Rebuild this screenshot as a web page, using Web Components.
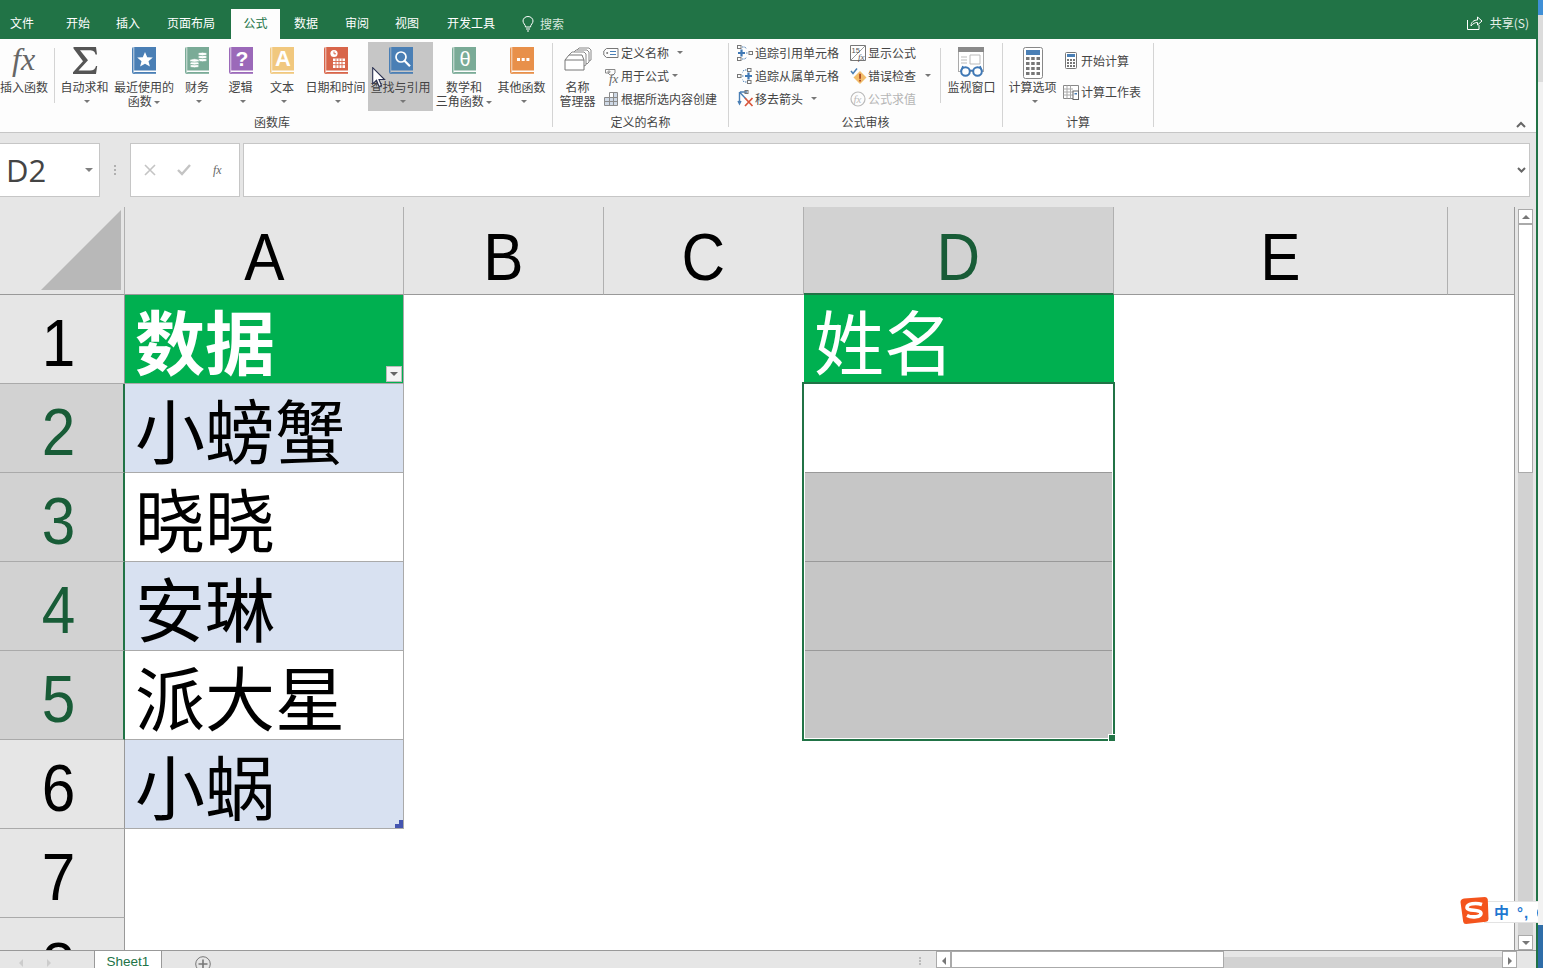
<!DOCTYPE html>
<html lang="zh">
<head>
<meta charset="utf-8">
<title>Excel</title>
<style>
  html, body { margin: 0; padding: 0; height: 100%; overflow: hidden; background: #e6e6e6; }
  body { font-family: "Noto Sans CJK SC", "Liberation Sans", sans-serif; font-size: 12px; color: #444; }
</style>
</head>
<body>
<xl-app>
  <xl-tabs></xl-tabs>
  <xl-ribbon>
    <xl-group label="函数库" style="width:552px" shift="8">
      <xl-big style="width:48px;margin-right:6px"><xl-icon name="fx"></xl-icon>插入函数</xl-big>
      <xl-sep short></xl-sep>
      <xl-big style="width:59px"><xl-icon name="sigma"></xl-icon>自动求和<br><xl-caret nudge></xl-caret></xl-big>
      <xl-big style="width:60px"><xl-icon name="recent"></xl-icon>最近使用的<br>函数 <xl-caret></xl-caret></xl-big>
      <xl-big style="width:46px"><xl-icon name="finance"></xl-icon>财务<br><xl-caret nudge></xl-caret></xl-big>
      <xl-big style="width:41px"><xl-icon name="logic"></xl-icon>逻辑<br><xl-caret nudge></xl-caret></xl-big>
      <xl-big style="width:42px"><xl-icon name="text"></xl-icon>文本<br><xl-caret nudge></xl-caret></xl-big>
      <xl-big style="width:65px"><xl-icon name="date"></xl-icon>日期和时间<br><xl-caret nudge></xl-caret></xl-big>
      <xl-big style="width:65px" hot><xl-icon name="lookup"></xl-icon>查找与引用<br><xl-caret nudge></xl-caret></xl-big>
      <xl-big style="width:62px"><xl-icon name="math"></xl-icon>数学和<br>三角函数 <xl-caret></xl-caret></xl-big>
      <xl-big style="width:53px"><xl-icon name="more"></xl-icon>其他函数<br><xl-caret nudge></xl-caret></xl-big>
    </xl-group>
    <xl-sep></xl-sep>
    <xl-group label="定义的名称" style="width:175px">
      <xl-big style="width:49px"><xl-icon name="names"></xl-icon>名称<br>管理器</xl-big>
      <xl-col>
        <xl-small><xl-icon name="define"></xl-icon>定义名称<xl-caret style="margin-left:8px"></xl-caret></xl-small>
        <xl-small><xl-icon name="useformula"></xl-icon>用于公式<xl-caret style="margin-left:3px"></xl-caret></xl-small>
        <xl-small><xl-icon name="fromsel"></xl-icon>根据所选内容创建</xl-small>
      </xl-col>
    </xl-group>
    <xl-sep></xl-sep>
    <xl-group label="公式审核" style="width:273px">
      <xl-col style="width:113px;margin-left:7px">
        <xl-small><xl-icon name="prec"></xl-icon>追踪引用单元格</xl-small>
        <xl-small><xl-icon name="dep"></xl-icon>追踪从属单元格</xl-small>
        <xl-small><xl-icon name="rmarrow"></xl-icon>移去箭头<xl-caret style="margin-left:8px"></xl-caret></xl-small>
      </xl-col>
      <xl-col style="width:91px">
        <xl-small><xl-icon name="show"></xl-icon>显示公式</xl-small>
        <xl-small><xl-icon name="check"></xl-icon>错误检查<xl-caret style="margin-left:9px"></xl-caret></xl-small>
        <xl-small off><xl-icon name="evalf"></xl-icon>公式求值</xl-small>
      </xl-col>
      <xl-sep short></xl-sep>
      <xl-big style="width:61px"><xl-icon name="watch"></xl-icon>监视窗口</xl-big>
    </xl-group>
    <xl-sep></xl-sep>
    <xl-group label="计算" style="width:150px">
      <xl-big style="width:59px"><xl-icon name="calcopt"></xl-icon>计算选项<br><xl-caret nudge></xl-caret></xl-big>
      <xl-col tall>
        <xl-small tall><xl-icon name="calcnow"></xl-icon>开始计算</xl-small>
        <xl-small tall><xl-icon name="calcsheet"></xl-icon>计算工作表</xl-small>
      </xl-col>
    </xl-group>
    <xl-sep></xl-sep>
  </xl-ribbon>
  <xl-formula></xl-formula>
  <xl-main>
    <xl-sheet></xl-sheet>
    <xl-scroll></xl-scroll>
  </xl-main>
  <xl-bottom></xl-bottom>
  <xl-cursor></xl-cursor>
  <xl-ime></xl-ime>
</xl-app>

<script>
// book shaped ribbon icons share the same cover
function book(color, inner) {
  return `<svg width="24" height="27" viewBox="0 0 24 27">
    <path d="M0 2Q0 0 1.5 0V25.5L3 26.5H24V27H2Q0 27 0 25Z" fill="${color}"/>
    <rect x="2.2" y="0" width="21.8" height="23.5" fill="${color}"/>
    <rect x="2.2" y="25" width="21.8" height="1.6" fill="${color}"/>
    ${inner}</svg>`;
}
const bookText = (t, size, extra) =>
  `<text x="13" y="19" text-anchor="middle" fill="#fff" font-family="Liberation Sans" font-size="${size}" ${extra || ""}>${t}</text>`;

const coin = (x, y) => `<ellipse cx="${x}" cy="${y}" rx="4.6" ry="1.7" fill="#fff" stroke="#7aab97" stroke-width=".7"/>`;

const ICONS = {
  fx: `<svg width="26" height="30" viewBox="0 0 26 30"><text x="1" y="23" font-family="Liberation Serif" font-style="italic" font-size="32" fill="#666">fx</text></svg>`,
  sigma: `<svg width="24" height="27" viewBox="0 0 24 27"><path d="M0.5 0H23L24 7.5H22.5C22 4.5 20 3.3 16 3.3H7L15 13.2L5.5 23.5H17C20.5 23.5 22.3 22 23 19H24.2L23 27H0V25.3L10 14.2L0.5 1.6Z" fill="#555"/></svg>`,
  recent: book("#4a7fb5", `<polygon fill="#fff" points="13,5 15.2,10.2 20.8,10.6 16.5,14.2 17.9,19.6 13,16.7 8.1,19.6 9.5,14.2 5.2,10.6 10.8,10.2"/>`),
  finance: book("#7aab97", coin(17.5, 13) + coin(17.5, 10) + coin(17.5, 7) + coin(9.5, 19) + coin(9.5, 16.2) + coin(9.5, 13.4)),
  logic: book("#9b69b9", bookText("?", 21, 'font-weight="bold"')),
  text: book("#f1c87e", bookText("A", 22, 'font-weight="bold"')),
  date: book("#d8654a", `<circle cx="10" cy="6.5" r="3.6" fill="#fff"/><path d="M10 4.5V6.8H12" stroke="#d8654a" fill="none"/><path d="M9 11.5H21V21H9Z" fill="#fff"/><path d="M12 11.5V21M15 11.5V21M18 11.5V21M9 14.5H21M9 17.7H21" stroke="#d8654a" stroke-width=".9"/>`),
  lookup: book("#4a7fb5", `<circle cx="12" cy="10" r="5" fill="none" stroke="#fff" stroke-width="1.7"/><path d="M15.5 13.7L21 19.3" stroke="#fff" stroke-width="2.2"/>`),
  math: book("#7aab97", `<text x="13" y="19" text-anchor="middle" fill="#fff" font-family="Liberation Sans" font-size="20">θ</text>`),
  more: book("#e8904a", `<g fill="#fff"><rect x="7" y="11" width="3" height="3"/><rect x="11.7" y="11" width="3" height="3"/><rect x="16.4" y="11" width="3" height="3"/></g>`),
  names: `<svg width="28" height="24" viewBox="0 0 28 24" fill="#fff" stroke="#888"><path d="M12 4L15 1H25L27 3V13L25 14Z"/><path d="M9 6L12 3H23L25 5V15L23 17Z"/><path d="M5 8L8 5H20L22 7V18L20 19Z"/><path d="M1 13L5 8H18L20 13V23H1Z" stroke="#777"/><path d="M1 13H20" stroke="#777"/></svg>`,
  define: `<svg width="16" height="14" viewBox="0 0 16 14" fill="none" stroke="#777"><path d="M3.5 2.5H15V11.5H3.5L.8 9V5Z"/><circle cx="4.2" cy="7" r="1" fill="#777" stroke="none"/><path d="M7 5.5H13M7 8.5H13" stroke="#4a7fb5"/></svg>`,
  useformula: `<svg width="16" height="16" viewBox="0 0 16 16" fill="none" stroke="#888"><path d="M2.5 1.5H12V5L10 7H7L5 5H2.5Z"/><circle cx="6" cy="3.8" r="1"/><text x="6" y="15" font-family="Liberation Serif" font-style="italic" font-size="13" fill="#666" stroke="none">fx</text></svg>`,
  fromsel: `<svg width="16" height="16" viewBox="0 0 16 16"><path d="M1.5 6.5H6.5V1.5H14.5V14.5H1.5Z" fill="#cfd9e6" stroke="#8b8b8b"/><path d="M1.5 10.5H14.5M6.5 6.5V14.5M10.5 1.5V14.5M6.5 6.5H14.5" stroke="#8b8b8b" fill="none"/><rect x="7" y="2" width="3" height="4" fill="#fff"/></svg>`,
  prec: `<svg width="16" height="16" viewBox="0 0 16 16" fill="none"><g stroke="#777"><rect x=".5" y=".5" width="3.5" height="3"/><rect x=".5" y="12.5" width="3.5" height="3"/><rect x="12" y="6.5" width="3.5" height="3"/></g><path d="M5 2H8L9.5 4M5 14H8L9.5 12M9 8H11" stroke="#4a7fb5" stroke-dasharray="1.5 1"/><path d="M1 8H8M4.5 4.5V11.5" stroke="#3f78b5" stroke-width="2.2"/></svg>`,
  dep: `<svg width="16" height="16" viewBox="0 0 16 16" fill="none"><g stroke="#777"><rect x=".5" y="6.5" width="3.5" height="3"/><rect x="10.5" y=".5" width="3.5" height="3"/><rect x="10.5" y="12.5" width="3.5" height="3"/></g><path d="M5 8H7M9.5 2H7L5.5 4.5M9.5 14H7L5.5 11.5" stroke="#4a7fb5" stroke-dasharray="1.5 1"/><path d="M8 8H15M11.5 4.5V11.5" stroke="#3f78b5" stroke-width="2.2"/></svg>`,
  rmarrow: `<svg width="17" height="17" viewBox="0 0 17 17" fill="none"><path d="M2.5 2V13M1 11L2.5 14L4 11M2.5 2L9 9M10 2H3" stroke="#4a7fb5" stroke-width="1.4"/><rect x="8" y="0.5" width="3" height="3" stroke="#777"/><path d="M8 8L15.5 16M15.5 8L8 16" stroke="#d8553a" stroke-width="1.7"/></svg>`,
  show: `<svg width="16" height="16" viewBox="0 0 16 16" fill="#fff" stroke="#777"><path d="M.5 .5H15.5V15.5H.5Z"/><path d="M1 15L15 1" stroke="#999"/><text x="1.5" y="8" font-family="Liberation Sans" font-size="7.5" fill="#555" stroke="none">15</text><text x="8" y="14.5" font-family="Liberation Serif" font-style="italic" font-size="9" fill="#555" stroke="none">fx</text></svg>`,
  check: `<svg width="17" height="16" viewBox="0 0 17 16"><path d="M1 3L3 5.5L7 .5" stroke="#4a7fb5" stroke-width="1.5" fill="none"/><path d="M10 3L16.5 9.5L10 16L3.5 9.5Z" fill="#f2bd6b"/><rect x="9.2" y="5.8" width="1.7" height="5" fill="#a8431f"/><rect x="9.2" y="11.8" width="1.7" height="1.7" fill="#a8431f"/></svg>`,
  evalf: `<svg width="16" height="16" viewBox="0 0 16 16" fill="none"><circle cx="8" cy="8" r="7" stroke="#bbb" stroke-width="1.2"/><text x="3.5" y="12" font-family="Liberation Serif" font-style="italic" font-size="11" fill="#bbb">fx</text></svg>`,
  watch: `<svg width="27" height="30" viewBox="0 0 27 30" fill="none"><rect x=".5" y=".5" width="25" height="24" fill="#fff" stroke="#aaa"/><rect x="0" y="0" width="26" height="5" fill="#8a8a8a"/><path d="M3 10H9M3 13H9M3 16H9M12 8H22V17H12Z" stroke="#bbb"/><circle cx="7.5" cy="24.5" r="4.3" fill="#fff" stroke="#3f78b5" stroke-width="2"/><circle cx="19.5" cy="24.5" r="4.3" fill="#fff" stroke="#3f78b5" stroke-width="2"/><path d="M11.5 23.5H15.5M3 24L5 19M24 24L22 19" stroke="#3f78b5" stroke-width="1.6"/></svg>`,
  calcopt: `<svg width="20" height="32" viewBox="0 0 20 32"><rect x=".5" y=".5" width="19" height="31" rx="2" fill="#fff" stroke="#888"/><rect x="3" y="3" width="14" height="5" fill="#4a7fb5"/><g fill="#777"><rect x="3" y="10" width="3.5" height="3"/><rect x="8.2" y="10" width="3.5" height="3"/><rect x="13.5" y="10" width="3.5" height="3"/><rect x="3" y="15" width="3.5" height="3"/><rect x="8.2" y="15" width="3.5" height="3"/><rect x="13.5" y="15" width="3.5" height="3"/><rect x="3" y="20" width="3.5" height="3"/><rect x="8.2" y="20" width="3.5" height="3"/><rect x="13.5" y="20" width="3.5" height="3"/><rect x="3" y="25" width="3.5" height="3"/><rect x="8.2" y="25" width="3.5" height="3"/><rect x="13.5" y="25" width="3.5" height="3"/></g></svg>`,
  calcnow: `<svg width="14" height="17" viewBox="0 0 14 17"><rect x="1.5" y=".5" width="11" height="16" rx="1" fill="#fff" stroke="#777"/><rect x="3" y="2" width="8" height="3" fill="#4a7fb5"/><g fill="#777"><rect x="3" y="7" width="2" height="2"/><rect x="6" y="7" width="2" height="2"/><rect x="9" y="7" width="2" height="2"/><rect x="3" y="10" width="2" height="2"/><rect x="6" y="10" width="2" height="2"/><rect x="9" y="10" width="2" height="2"/><rect x="3" y="13" width="2" height="2"/><rect x="6" y="13" width="2" height="2"/><rect x="9" y="13" width="2" height="2"/></g></svg>`,
  calcsheet: `<svg width="16" height="16" viewBox="0 0 16 16" fill="#fff" stroke="#888"><path d="M.5 1.5H15.5V14.5H.5Z"/><path d="M.5 5H10M.5 8H10M.5 11H10M4 1.5V14.5M7.5 1.5V14.5" stroke="#aaa"/><rect x="10" y="7" width="5.5" height="8.5" stroke="#666"/><rect x="11.5" y="9" width="2.5" height="1.5" fill="#4a7fb5" stroke="none"/></svg>`
};

function def(name, css, html, setup) {
  customElements.define(name, class extends HTMLElement {
    constructor() {
      super();
      const root = this.attachShadow({ mode: "open" });
      root.innerHTML = `<style>${css}</style>${html}`;
    }
    connectedCallback() { if (setup) setup(this, this.shadowRoot); }
  });
}

def("xl-app", `
  :host { display: block; position: relative; width: 1543px; height: 968px; overflow: hidden; background: #e6e6e6; }
  .wrap { display: flex; flex-direction: column; width: 1536px; height: 968px; border-right: 2px solid #217346; box-sizing: content-box; }
  .strip { position: absolute; left: 1538px; top: 0; width: 5px; height: 968px;
    background: linear-gradient(#3f8fd6 0 15px, #dcdcdc 15px 82px, #f2f2f2 82px 925px, #2f6da8 925px 968px); }
`, `<div class="wrap"><slot></slot></div><div class="strip"></div>`);

const TABS = [["文件",44,9],["开始",50],["插入",50],["页面布局",76,2],["公式",49],["数据",52],["审阅",50],["视图",50],["开发工具",78]];
def("xl-tabs", `
  :host { display: flex; height: 39px; flex: none; background: #217346; color: #fff; font-size: 12px; position: relative; }
  .t { display: flex; align-items: center; justify-content: center; height: 30px; margin-top: 9px; padding-bottom: 3px; box-sizing: border-box; }
  .t.on { background: #fdfdfd; color: #217346; }
  .search { display: flex; align-items: center; gap: 6px; margin: 9px 0 0 12px; height: 30px; padding-bottom: 1px; box-sizing: border-box; color: #d8e8df; }
  .share { margin-left: auto; display: flex; align-items: center; gap: 7px; padding: 6px 7px 0 0; color: #e6f0ea; }
`, TABS.map(([t,w,m]) => `<div class="t${t==="公式"?" on":""}" style="width:${w}px;margin-right:${m||0}px">${t}</div>`).join("") + `
  <div class="search"><svg width="12" height="16" viewBox="0 0 12 16" fill="none" stroke="#fff"><path d="M3.5 11C3.5 8.5 1 7.5 1 5A5 4.5 0 0 1 11 5C11 7.5 8.5 8.5 8.5 11Z"/><path d="M4 13H8M5 15H7"/></svg><span>搜索</span></div>
  <div class="share"><svg width="16" height="15" viewBox="0 0 16 15" fill="none" stroke="#fff"><path d="M.5 5V14.5H12V10"/><path d="M4 11C4 7 7 5 10.5 5V2L15 6L10.5 10V7.5C8 7.5 6 8.5 4 11Z"/></svg><span>共享(S)</span></div>`);

def("xl-ribbon", `
  :host { display: flex; align-items: flex-start; flex: none; height: 94px; background: #fdfdfd; border-bottom: 1px solid #c6c6c6; box-sizing: border-box; position: relative; }
  .up { position: absolute; right: 10px; bottom: 4px; }
`, `<slot></slot><svg class="up" width="10" height="7" viewBox="0 0 10 7" fill="none" stroke="#666" stroke-width="2"><path d="M1 6L5 2L9 6"/></svg>`);

def("xl-group", `
  :host { display: flex; flex-direction: column; flex: none; height: 93px; box-sizing: border-box; padding-top: 3px; }
  .items { display: flex; align-items: flex-start; height: 72px; }
  .label { text-align: center; height: 16px; line-height: 16px; }
`, `<div class="items"><slot></slot></div><div class="label"></div>`, (el, root) => {
  const l = root.querySelector(".label");
  l.textContent = el.getAttribute("label");
  l.style.paddingRight = (el.getAttribute("shift") || 0) + "px";
});

def("xl-sep", `
  :host { display: block; flex: none; width: 1px; height: 84px; margin-top: 4px; background: #d4d4d4; }
  :host([short]) { height: 55px; margin-top: 6px; }
`, ``);

def("xl-big", `
  :host { display: block; flex: none; height: 69px; text-align: center; line-height: 14px; white-space: nowrap; }
  :host([hot]) { background: #c6c6c6; }
  .box { display: flex; flex-direction: column; align-items: center; }
  .ic { display: flex; justify-content: center; height: 33px; padding-top: 5px; box-sizing: content-box; }
  .tx { width: 100%; text-align: center; }
  ::slotted(xl-icon) { display: block; }
`, `<div class="box"><div class="ic"><slot name="icon"></slot></div><div class="tx"><slot></slot></div></div>`, (el) => {
  const ic = el.querySelector("xl-icon");
  if (ic) ic.slot = "icon";
});

def("xl-col", `
  :host { display: flex; flex-direction: column; flex: none; margin-top: -1px; }
  :host([tall]) { padding-top: 4px; }
`, `<slot></slot>`);

def("xl-small", `
  :host { display: flex; align-items: center; height: 23px; white-space: nowrap; }
  :host([tall]) { height: 31px; }
  :host([off]) { color: #b5b5b5; }
  .ic { display: flex; justify-content: center; align-items: center; width: 18px; margin-right: 1px; flex: none; }
`, `<div class="ic"><slot name="icon"></slot></div><slot></slot>`, (el) => {
  const ic = el.querySelector("xl-icon");
  if (ic) ic.slot = "icon";
});

def("xl-caret", `
  :host { display: inline-block; width: 0; height: 0; vertical-align: middle; border-left: 3px solid transparent; border-right: 3px solid transparent; border-top: 3px solid #777; }
  :host([nudge]) { position: relative; left: 2px; top: -1px; }
`, ``);

def("xl-icon", `:host { display: inline-flex; line-height: 0; } svg { display: block; overflow: visible; }`, ``, (el, root) => {
  root.innerHTML += ICONS[el.getAttribute("name")] || "";
});

def("xl-formula", `
  :host { display: flex; align-items: flex-start; flex: none; height: 74px; padding-top: 10px; box-sizing: border-box; background: #e6e6e6; }
  .box { height: 54px; background: #fff; border: 1px solid #c6c6c6; box-sizing: border-box; display: flex; align-items: center; }
  .name { width: 101px; margin-left: -1px; font: 31px "Open Sans", sans-serif; color: #444; padding-left: 6px; position: relative; }
  .tri { position: absolute; right: 6px; top: 24px; border-left: 4px solid transparent; border-right: 4px solid transparent; border-top: 4px solid #808080; }
  .dots { width: 30px; display: flex; flex-direction: column; align-items: center; gap: 2px; padding-top: 22px; }
  .dots i { width: 2px; height: 2px; background: #b0b0b0; }
  .btns { width: 110px; justify-content: space-around; padding: 0 2px; color: #bbb; }
  .input { flex: 1; margin: 0 6px 0 3px; justify-content: flex-end; padding-right: 3px; }
`, `<div class="box name">D2<span class="tri"></span></div>
  <div class="dots"><i></i><i></i><i></i></div>
  <div class="box btns">
    <svg width="12" height="12" viewBox="0 0 12 12" stroke="#c4c4c4" stroke-width="1.6"><path d="M1 1L11 11M11 1L1 11"/></svg>
    <svg width="14" height="12" viewBox="0 0 14 12" fill="none" stroke="#c4c4c4" stroke-width="2.4"><path d="M1 6L5 10L13 1"/></svg>
    <svg width="14" height="14" viewBox="0 0 14 14"><text x="1" y="11" font-family="Liberation Serif" font-style="italic" font-size="12" fill="#666">fx</text></svg>
  </div>
  <div class="box input"><svg width="9" height="6" viewBox="0 0 9 6" fill="none" stroke="#666" stroke-width="2"><path d="M1 1L4.5 4.5L8 1"/></svg></div>`);

def("xl-main", `:host { display: flex; flex: none; height: 743px; overflow: hidden; }`, `<slot></slot>`);

const COLS = ["A", "B", "C", "D", "E"];
const DATA = { 2: "小螃蟹", 3: "晓晓", 4: "安琳", 5: "派大星", 6: "小蜗" };
function sheetHtml() {
  let h = `<div class="corner"><svg width="80" height="80" viewBox="0 0 80 80"><path d="M80 0V80H0Z" fill="#b8b8b8"/></svg></div>`;
  COLS.forEach((c) => { h += `<div class="ch${c==="D"?" act":""}"><span>${c}</span></div>`; });
  h += `<div class="rest"></div>`;
  for (let r = 1; r <= 8; r++) {
    const act = r >= 2 && r <= 5;
    h += `<div class="rh${act?" act":""}"><span>${r}</span></div>`;
    // A
    if (r === 1) h += `<div class="c head bold">数据<span class="filter"><i></i></span></div>`;
    else if (DATA[r]) h += `<div class="c tb ${r%2===0?"band":""}">${DATA[r]}${r===6?'<span class="grip"></span>':""}</div>`;
    else h += `<div class="c"></div>`;
    h += `<div class="c"></div><div class="c"></div>`;
    // D
    if (r === 1) h += `<div class="c head">姓名</div>`;
    else if (r === 2) h += `<div class="c dsel"></div>`;
    else if (r >= 3 && r <= 5) h += `<div class="c dsel gray"></div>`;
    else h += `<div class="c"></div>`;
    h += `<div class="c"></div><div class="c last"></div>`;
  }
  h += `<div class="sel"><span class="handle"></span></div>`;
  return h;
}
def("xl-sheet", `
  :host { display: grid; flex: none; position: relative; width: 1515px; height: 743px; box-sizing: border-box; overflow: hidden; align-content: start;
    grid-template-columns: 125px 279px 200px 200px 310px 334px 67px; grid-template-rows: 88px repeat(8, 89px); background: #fff; }
  * { box-sizing: border-box; }
  .corner { display: flex; align-items: flex-end; justify-content: flex-end; padding: 0 3px 4px 0; background: #e6e6e6; border-right: 1px solid #b0b0b0; border-bottom: 1px solid #999; }
  .ch, .rh { display: flex; align-items: center; justify-content: center; background: #e6e6e6; color: #000; font: 67px/88px "Liberation Sans", sans-serif; }
  .ch span, .rh span { display: inline-block; transform: scaleX(.9); }
  .ch { border-right: 1px solid #b0b0b0; border-bottom: 1px solid #999; padding-top: 13px; }
  .ch.act { background: #d2d2d2; color: #185c37; border-bottom: 2px solid #217346; }
  .rest { background: #e6e6e6; border-bottom: 1px solid #999; border-right: 1px solid #999; }
  .rh { border-right: 1px solid #999; border-bottom: 1px solid #aaa; padding: 7px 6px 0 0; }
  .rh.act { background: #d2d2d2; color: #185c37; border-right: 2px solid #217346; }
  .c { position: relative; background: #fff; color: #000; font: 70px/90px "Noto Sans CJK SC", sans-serif; padding-left: 10px; white-space: nowrap; }
  .last { border-right: 1px solid #999; }
  .head { background: #00b050; color: #fff; }
  .bold { font-weight: 700; border-right: 1px solid #aaa; border-bottom: 1px solid #aaa; }
  .tb { border-right: 1px solid #aaa; border-bottom: 1px solid #aaa; }
  .band { background: #d8e1f1; }
  .filter { position: absolute; right: 1px; bottom: 1px; width: 16px; height: 16px; background: #f4f4f4; border: 1px solid #bbb; display: flex; align-items: center; justify-content: center; }
  .filter i { border-left: 4px solid transparent; border-right: 4px solid transparent; border-top: 4px solid #666; }
  .grip { position: absolute; right: 0; bottom: 0; width: 8px; height: 8px; background: #4455b0; clip-path: polygon(100% 0, 100% 100%, 0 100%, 0 50%, 50% 50%, 50% 0); }
  .dsel { padding: 0; }
  .gray { background: #c6c6c6; border-top: 1px solid #999; margin-top: -1px; }
  .sel { position: absolute; left: 802px; top: 175px; width: 313px; height: 359px; border: 2px solid #217346; box-shadow: inset 0 0 0 1px #fff; pointer-events: none; }
  .handle { position: absolute; right: -3px; bottom: -3px; width: 6px; height: 6px; background: #217346; border: 1px solid #fff; box-sizing: content-box; }
`, sheetHtml());

def("xl-scroll", `
  :host { display: flex; flex-direction: column; flex: none; width: 21px; padding: 2px 3px 0 3px; box-sizing: border-box; background: #e6e6e6; height: 743px; }
  .b { height: 15px; flex: none; background: #fff; border: 1px solid #aaa; box-sizing: border-box; display: flex; align-items: center; justify-content: center; }
  .up { border-left: 4px solid transparent; border-right: 4px solid transparent; border-bottom: 4px solid #777; }
  .dn { border-left: 4px solid transparent; border-right: 4px solid transparent; border-top: 4px solid #777; }
  .thumb { height: 249px; flex: none; background: #fff; border: 1px solid #aaa; box-sizing: border-box; }
  .track { flex: 1; background: #d2d2d2; }
`, `<div class="b"><i class="up"></i></div><div class="thumb"></div><div class="track"></div><div class="b"><i class="dn"></i></div>`);

def("xl-bottom", `
  :host { display: flex; align-items: stretch; flex: none; height: 18px; background: #e6e6e6; border-top: 1px solid #999; box-sizing: border-box; position: relative; overflow: hidden; }
  .nav { width: 94px; display: flex; align-items: center; gap: 24px; padding: 6px 0 0 19px; box-sizing: border-box; }
  .l { border-top: 4px solid transparent; border-bottom: 4px solid transparent; border-right: 4px solid #ccc; }
  .r { border-top: 4px solid transparent; border-bottom: 4px solid transparent; border-left: 4px solid #ccc; }
  .tab { width: 68px; margin-top: -1px; background: #fff; border-left: 1px solid #999; border-right: 1px solid #999; box-sizing: border-box; color: #217346; font: 13.5px/24px "Liberation Sans", sans-serif; text-align: center; }
  .plus { margin: 5px 0 0 33px; width: 16px; height: 16px; flex: none; }
  .dots { margin-left: auto; width: 14px; padding-top: 6px; color: #aaa; display: flex; flex-direction: column; gap: 1px; align-items: center; }
  .dots i { width: 2px; height: 2px; background: #bbb; }
  .h { width: 581px; margin: 0 19px 0 9px; display: flex; }
  .btn { width: 15px; flex: none; background: #fff; border: 1px solid #aaa; box-sizing: border-box; display: flex; align-items: center; justify-content: center; padding-top: 3px; }
  .thumb { width: 273px; flex: none; background: #fff; border: 1px solid #aaa; box-sizing: border-box; }
  .track { flex: 1; background: #d2d2d2; margin-top: 6px; }
`, `<div class="nav"><i class="l"></i><i class="r"></i></div><div class="tab">Sheet1</div>
  <svg class="plus" viewBox="0 0 16 16" fill="none" stroke="#777"><circle cx="8" cy="8" r="7.3"/><path d="M8 3.5V12.5M3.5 8H12.5" stroke-width="1.6"/></svg>
  <div class="dots"><i></i><i></i><i></i></div>
  <div class="h"><div class="btn"><i class="l" style="border-right-color:#777"></i></div><div class="thumb"></div><div class="track"></div><div class="btn"><i class="r" style="border-left-color:#777"></i></div></div>`);

def("xl-cursor", `:host { position: absolute; left: 372px; top: 67px; width: 14px; height: 22px; }`,
  `<svg width="14" height="22" viewBox="0 0 14 22"><path d="M.7.7V17L4.5 13.3L7 19.5L9.5 18.5L7 12.5H12.5Z" fill="#fff" stroke="#2a3050" stroke-width="1.1"/></svg>`);

def("xl-ime", `
  :host { position: absolute; left: 1460px; top: 897px; width: 83px; height: 28px; }
  .bar { position: absolute; left: 24px; top: 4px; width: 60px; height: 22px; background: #fff; border: 1px solid #e3e3e3; border-right: 0; box-sizing: border-box; color: #1f78d1; font: 700 15px/20px "Noto Sans CJK SC", sans-serif; white-space: nowrap; padding-left: 9px; }
  .bar b { font: 700 15px/20px "Liberation Sans", sans-serif; margin-left: 8px; letter-spacing: 1px; }
  .ring { position: absolute; left: 52px; top: 2px; width: 14px; height: 14px; border: 2px solid #1f78d1; border-radius: 50%; }
  svg { position: absolute; left: 0; top: 0; }
`, `<div class="bar">中<b>°,</b><span class="ring"></span></div>
  <svg width="29" height="28" viewBox="0 0 29 28"><path d="M4 1.5L25 0Q27.5 0 27.8 2.5L28.5 22Q28.5 24.5 26 24.8L6 27Q3.5 27 3.2 24.7L0.5 5Q0.5 2 4 1.5Z" fill="#f4541d"/><path d="M22 7.5C16 5.5 7 6.5 7 10.5C7 14.5 21 12 21 16.5C21 20 12 21 7 18.5" fill="none" stroke="#fff" stroke-width="3.6"/></svg>`);
</script>
</body>
</html>
